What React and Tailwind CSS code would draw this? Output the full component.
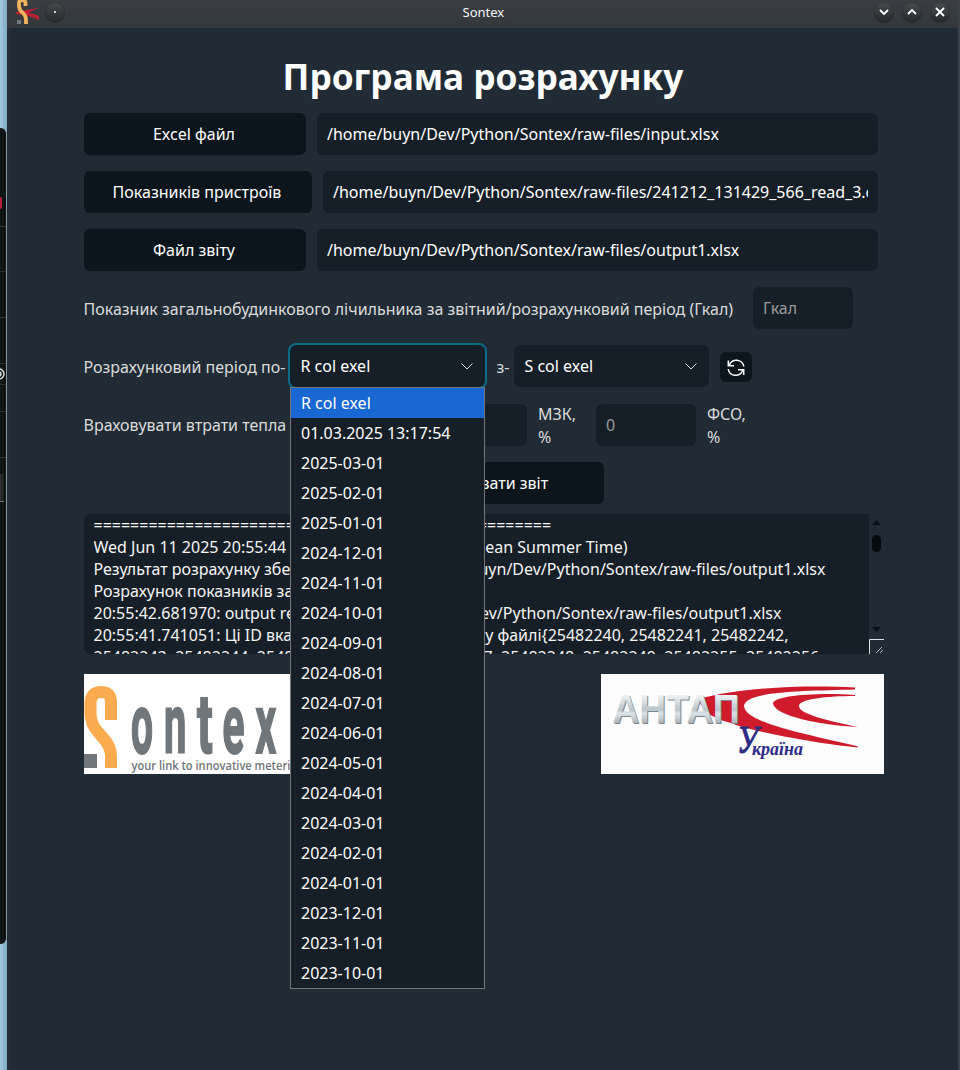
import React from "react";

const PERIODS = [
  "R col exel", "01.03.2025 13:17:54", "2025-03-01", "2025-02-01", "2025-01-01",
  "2024-12-01", "2024-11-01", "2024-10-01", "2024-09-01", "2024-08-01",
  "2024-07-01", "2024-06-01", "2024-05-01", "2024-04-01", "2024-03-01",
  "2024-02-01", "2024-01-01", "2023-12-01", "2023-11-01", "2023-10-01",
];

const LOG = [
  { w: "w-[458px]", a: "=".repeat(50), b: "" },
  { w: "w-[534px]", a: "Wed Jun 11 2025 20:55:44", b: "(Eastern European Summer Time)" },
  { w: "w-[732px]", a: "Результат розрахунку збережено", b: "/home/buyn/Dev/Python/Sontex/raw-files/output1.xlsx" },
  { w: "w-[360px]", a: "Розрахунок показників завершено", b: "" },
  { w: "w-[688px]", a: "20:55:42.681970: output report", b: "/home/buyn/Dev/Python/Sontex/raw-files/output1.xlsx" },
  { w: "w-[695px]", a: "20:55:41.741051: Ці ID вказані", b: "у файлі{25482240, 25482241, 25482242," },
  { w: "w-[730px]", a: "25482243, 25482244, 25482245,", b: "25482247, 25482248, 25482249, 25482255, 25482256," },
];

function FileRow({ label, value, wide }) {
  return (
    <div className="flex h-[42px] w-[794px] gap-[11px]">
      <button className={`${wide ? "w-[228px]" : "w-[222px]"} shrink-0 rounded-md bg-[#0c151c] pr-0.5 text-white`}>{label}</button>
      <div className="flex min-w-0 flex-1 items-center rounded-md bg-[#161f27] px-2.5 text-white">
        <span className="overflow-hidden whitespace-nowrap">{value}</span>
      </div>
    </div>
  );
}

function Select({ value, focused, children }) {
  return (
    <div className={`relative flex h-[42px] w-[195px] shrink-0 items-center justify-between rounded-md bg-[#161f27] pl-[10.500px] pr-3 text-white ${focused ? "shadow-[0_0_0_2px_#0d6b83]" : ""}`}>
      <span>{value}</span>
      <svg width="12" height="7" viewBox="0 0 12 7" fill="none" stroke="#e4e4e4" strokeWidth="1"><path d="M.5 .5l5.500 5.500 5.500-5.500" /></svg>
      {children}
    </div>
  );
}

function WinButton({ children }) {
  return (
    <div className="flex size-[18px] items-center justify-center rounded-full bg-gradient-to-b from-[#45494c] to-[#292d30] shadow-[0_1px_2px_#15181a]">
      <svg width="12" height="12" viewBox="0 0 12 12" fill="none" stroke="#fff" strokeWidth="1.8">{children}</svg>
    </div>
  );
}

function TitleBar() {
  return (
    <header className="flex h-7 shrink-0 items-start bg-gradient-to-b from-[#3a3e42] to-[#33383c] pl-2 pr-[9px]">
      <svg className="h-[25px] w-[26px]" viewBox="0 0 26 25" fill="none">
        <path d="M1 12q10-2 22-4-8 4-9 5 6 1 10 3v4q-8-4-16-5l-7-1z" fill="#bd1f33" />
        <path d="M10.500 6V3Q10.500 0 7 0T4 4v2q0 4 4 7 3 3 3 7v4" stroke="#f4b45c" strokeWidth="3.800" />
        <path d="M2 20h4v4H2z" fill="#767b7e" />
      </svg>
      <div className="ml-[5px] mt-[3px] flex size-[18px] items-center justify-center rounded-full bg-gradient-to-b from-[#45494c] to-[#292d30] shadow-[0_1px_2px_#15181a]">
        <span className="size-0.5 rounded-full bg-white" />
      </div>
      <span className="ml-[398.500px] mt-[3px] flex-1 text-[13px] leading-[19px] text-[#f4f4f4]">Sontex</span>
      <div className="mt-[3px] flex gap-2.5">
        <WinButton><path d="M2 4l4 4 4-4" /></WinButton>
        <WinButton><path d="M2 8l4-4 4 4" /></WinButton>
        <WinButton><path d="M2 2l8 8M10 2l-8 8" /></WinButton>
      </div>
    </header>
  );
}

function SontexLogo() {
  return (
    <svg className="h-[100px] w-[283px] bg-white" viewBox="0 0 283 100">
      <path d="M27 46V28Q27 18 17 18T6.500 29v10Q6.500 50 14 58L20 65Q27 73 27 82V94" fill="none" stroke="#f9ab4d" strokeWidth="12" />
      <path d="M0 80h13v14H0z" fill="#70767a" />
      <g fill="#70767a" stroke="#70767a" strokeWidth="2" fontFamily="Roboto" fontWeight="700" fontSize="83">
        <text transform="translate(47 78.500) scale(.47 1)">o</text>
        <text transform="translate(80 78.500) scale(.48 1)">n</text>
        <text transform="translate(113 78.500) scale(.56 1)">t</text>
        <text transform="translate(138.500 78.500) scale(.49 1)">e</text>
        <text transform="translate(171.500 78.500) scale(.49 1)">x</text>
      </g>
      <text x="47.500" y="95.500" fill="#70767a" fontFamily="Open Sans" fontWeight="600" fontSize="12.500" textLength="172" lengthAdjust="spacingAndGlyphs">your link to innovative metering</text>
    </svg>
  );
}

function AntapLogo() {
  return (
    <svg className="h-[100px] w-[283px] bg-[#fdfdfd]" viewBox="0 0 283 100">
      <defs>
        <linearGradient id="steel" x1="0" y1="0" x2="0" y2="1">
          <stop offset=".2" stopColor="#edf1f3" /><stop offset=".52" stopColor="#b9c5cb" />
          <stop offset=".6" stopColor="#dbe5e9" /><stop offset=".82" stopColor="#a9b3b9" />
        </linearGradient>
      </defs>
      <g fill="#cf1b2b">
        <path d="M98 25C140 13 205 11 254 13.500V15.500C202 17 144 17 143 32C144 49 205 60 257 72.500V73.500C218 70 148 57 130 49Q101 42 98 25Z" />
        <path d="M254 21C213 18 172 22 172 29.500C174 42 219 51 257 53C225 46 198 40 198 32C198 25 226 22 254 22Z" />
      </g>
      <g fontFamily="Liberation Sans" fontWeight="700" fontSize="40">
        <text x="12.500" y="50" fill="#7d858a" textLength="127" lengthAdjust="spacingAndGlyphs">АНТАП</text>
        <text x="11.500" y="49" fill="url(#steel)" textLength="127" lengthAdjust="spacingAndGlyphs">АНТАП</text>
      </g>
      <g fill="#2c2c86" fontFamily="Liberation Serif" fontStyle="italic" fontWeight="700">
        <text transform="translate(136 79) scale(.8 1)" fontSize="39" fontWeight="400" stroke="#2c2c86" strokeWidth="1">У</text>
        <text x="151" y="80.500" fontSize="19" textLength="51" lengthAdjust="spacingAndGlyphs">країна</text>
      </g>
    </svg>
  );
}

export default function App() {
  return (
    <div className="flex h-[1070px] w-[960px] overflow-hidden bg-[#202b36] font-['Noto_Sans',sans-serif] text-base text-[#dbdbdb]">
      <aside className="flex w-[7px] shrink-0 flex-col bg-gradient-to-r from-[#a2cbe2] to-[#7fa9c0]">
        <div className="h-32" />
        <div className="flex h-[816px] flex-col overflow-hidden rounded-r-md border-r border-[#7d9999] bg-[#111414]">
          <div className="h-[69px]" />
          <div className="h-3 w-0.5 rounded-r bg-[#b42140]" />
          <div className="mt-[17px] h-[46px] border-y border-[#2d3232]" />
          <div className="h-[46px] border-b border-[#2d3232]" />
          <div className="h-[46px] border-b border-[#2d3232]" />
          <svg className="h-5 w-[5px] shrink-0" viewBox="0 0 5 20" fill="none" stroke="#dedede" strokeWidth="1.5"><circle cx="-1" cy="10" r="5" /><circle cx="-1" cy="10" r="2" /></svg>
          <div className="h-7 border-y border-[#2d3232]" />
          <div className="h-[46px] border-b border-[#2d3232]" />
          <div className="mt-4 h-7 w-1 border-b border-[#777] bg-gradient-to-r from-[#333] to-[#191b1b]" />
        </div>
      </aside>
      <div className="flex min-w-0 flex-1 flex-col border-r-2 border-[#3a4149]">
        <TitleBar />
        <main className="flex flex-1 flex-col border-l-[3px] border-[#252e3a] pl-[74px] pt-[26px]">
          <h1 className="h-[44px] w-[798px] text-center text-[35.200px] font-bold leading-[44px] text-white">Програма розрахунку</h1>
          <div className="mt-[15px] flex flex-col gap-4">
            <FileRow label="Excel файл" value="/home/buyn/Dev/Python/Sontex/raw-files/input.xlsx" />
            <FileRow label="Показників пристроїв" value="/home/buyn/Dev/Python/Sontex/raw-files/241212_131429_566_read_3.csv" wide />
            <FileRow label="Файл звіту" value="/home/buyn/Dev/Python/Sontex/raw-files/output1.xlsx" />
            <div className="flex h-[42px] items-center">
              <span className="-ml-[0.500px] w-[669.500px] whitespace-nowrap pt-0.5">Показник загальнобудинкового лічильника за звітний/розрахунковий період (Гкал)</span>
              <div className="flex h-[42px] w-[100px] items-center rounded-md bg-[#161f27] px-2.5 text-[#9a9a9a]">Гкал</div>
            </div>
            <div className="flex h-[42px] items-center">
              <span className="-ml-[0.500px] w-[206.500px] shrink-0 whitespace-nowrap pt-0.5">Розрахунковий період по-</span>
              <Select value="R col exel" focused>
                <ul className="absolute left-0 top-[42px] z-10 w-[195px] border border-[#767676] bg-[#161f27]">
                  {PERIODS.map((p, i) => (
                    <li key={p} className={`h-[30px] whitespace-nowrap pl-2.5 leading-[30px] ${i === 0 ? "bg-[#1967d2]" : ""}`}>{p}</li>
                  ))}
                </ul>
              </Select>
              <span className="ml-[11.500px] w-[17.500px] pt-0.5">з-</span>
              <Select value="S col exel" />
              <button className="ml-[11px] mt-px flex h-[30px] w-8 items-center justify-center rounded-md bg-[#0c151c] text-white">
                <svg width="20" height="20" viewBox="0 0 20 20" fill="none" stroke="currentColor" strokeWidth="1.5">
                  <path d="M3.200 8.500A7.500 7.500 0 0 1 17.800 9.500M16.800 13A7.500 7.500 0 0 1 2.200 12" />
                  <path d="M2.300 3.500v5.200H8M17.700 18v-5.200H12" />
                </svg>
              </button>
            </div>
          </div>
          <div className="mt-[17px] flex h-[42px] items-center">
            <span className="-ml-[0.500px] w-[343.500px] whitespace-nowrap">Враховувати втрати тепла</span>
            <div className="flex h-[42px] w-[100px] items-center rounded-md bg-[#161f27] px-2.5 text-[#9a9a9a]">0</div>
            <span className="ml-[11px] w-[58px] pt-0.5 leading-[23px]">МЗК,<br />%</span>
            <div className="flex h-[42px] w-[100px] items-center rounded-md bg-[#161f27] px-2.5 text-[#9a9a9a]">0</div>
            <span className="ml-[11px] pt-0.5 leading-[23px]">ФСО,<br />%</span>
          </div>
          <button className="ml-[280px] mt-4 h-[42px] w-60 rounded-md bg-[#0c151c] pr-px text-white">Сформувати звіт</button>
          <div className="mt-2.5 flex h-[140px] w-[800px]">
            <div className="w-[785px] overflow-hidden rounded-l-md bg-[#161f27] pl-[9.500px] leading-[22px] text-[#f5f5f5]">
              {LOG.map((l) => (
                <div key={l.a} className={`${l.w} flex h-[22px] whitespace-nowrap`}>
                  <span className="w-[198px] shrink-0 grow overflow-hidden">{l.a}</span>
                  {l.b && <span className="flex min-w-0 justify-end overflow-hidden">{l.b}</span>}
                </div>
              ))}
            </div>
            <div className="flex w-[15px] flex-col items-center">
              <svg className="mt-1.5 h-[5px] w-[9px] shrink-0" viewBox="0 0 9 5"><path d="M0 5L4.500 0 9 5z" fill="#080f16" /></svg>
              <div className="mt-2.5 h-[17px] w-[9px] rounded-full bg-[#040a10]" />
              <svg className="mt-[75px] h-[5px] w-[9px] shrink-0" viewBox="0 0 9 5"><path d="M0 0L4.500 5 9 0z" fill="#080f16" /></svg>
              <svg className="mt-[7px] h-[15px] w-[15px] shrink-0" viewBox="0 0 15 15" fill="none" stroke="#dfe2e5"><path d="M.5 15V.5H15" /><path d="M7 14l6-6M11 14l3-3" strokeWidth=".8" /></svg>
            </div>
          </div>
          <div className="mt-5 flex w-[800px] justify-between">
            <SontexLogo />
            <AntapLogo />
          </div>
        </main>
      </div>
    </div>
  );
}
